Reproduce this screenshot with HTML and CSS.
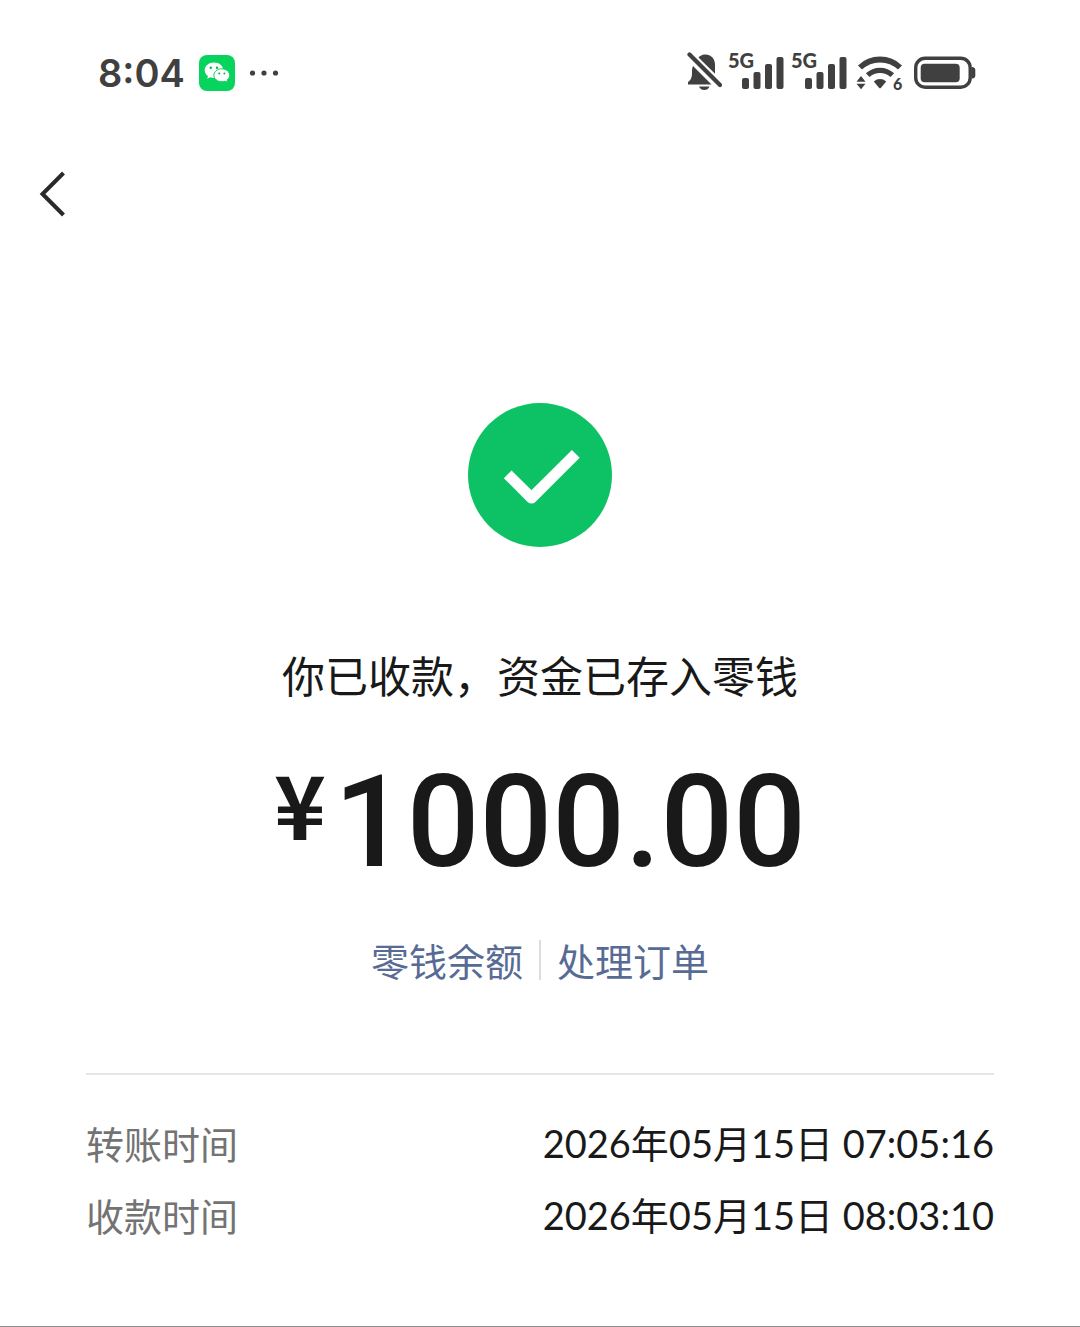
FILE: index.html
```html
<!DOCTYPE html>
<html lang="zh-CN">
<head>
    <meta charset="UTF-8">
    <meta name="viewport" content="width=device-width, initial-scale=1.0">
    <title>转账详情</title>
    <link rel="stylesheet" href="styles.css">
</head>
<body>
    <div class="status-bar">
        <div class="status-left">
            <span class="clock">8:04</span>
            <svg class="wechat" width="36" height="36" viewBox="0 0 36 36">
                <rect width="36" height="36" rx="8" fill="#06d45c"/>
                <path d="M15 7.500c-5.200 0-9.300 3.400-9.300 7.700 0 2.400 1.300 4.500 3.300 5.900l-.8 2.700 3.200-1.500c1.100.4 2.300.6 3.600.6 5.200 0 9.300-3.400 9.300-7.700S20.200 7.500 15 7.500z" fill="#fff"/>
                <path d="M22.800 13.800c4.400 0 7.900 2.900 7.900 6.500 0 2-1 3.700-2.700 4.900l.7 2.300-2.800-1.200c-1 .3-2 .5-3.100.5-4.400 0-7.900-2.900-7.900-6.500s3.500-6.500 7.900-6.500z" fill="#fff" stroke="#06d45c" stroke-width="1"/>
                <g fill="#06b552">
                    <circle cx="11.800" cy="12.800" r="1.200"/>
                    <circle cx="18" cy="12.800" r="1.200"/>
                    <circle cx="20.200" cy="18.500" r="1"/>
                    <circle cx="25.400" cy="18.500" r="1"/>
                </g>
            </svg>
            <svg class="more" width="30" height="8" viewBox="0 0 30 8" fill="#404040">
                <circle cx="3.500" cy="4" r="2.600"/>
                <circle cx="15" cy="4" r="2.600"/>
                <circle cx="26.500" cy="4" r="2.600"/>
            </svg>
        </div>
        <div class="status-right">
            <!-- muted bell -->
            <svg width="36" height="42" viewBox="0 0 36 42" fill="#404040">
                <path d="M7 16L25.500 34.500H2V32c2.400-1.600 3.500-3.400 3.900-6.500.3-3-.4-6.500 1.100-9.500z"/>
                <path d="M12.500 7.500c1.500-1.500 3.800-2.700 6-2.900 5.800-.6 10.500 3.900 10.500 9.900v9.300z"/>
                <path d="M13 36.500h10.500c-1 2.400-2.800 3.500-5.200 3.500s-4.300-1.100-5.300-3.500z"/>
                <path d="M3.500 4.500L34 35" stroke="#404040" stroke-width="4.200" stroke-linecap="round"/>
            </svg>
            <svg class="signal" width="59" height="50" viewBox="0 -4 59 50" fill="#404040">
                <text x="2" y="18">5G</text>
                <rect x="16" y="28" width="7" height="11" rx="2"/>
                <rect x="27.500" y="22" width="7" height="17" rx="2"/>
                <rect x="39" y="14" width="7" height="25" rx="2"/>
                <rect x="50.500" y="7" width="7" height="32" rx="2"/>
            </svg>
            <svg class="signal" width="59" height="50" viewBox="0 -4 59 50" fill="#404040">
                <text x="2" y="18">5G</text>
                <rect x="16" y="28" width="7" height="11" rx="2"/>
                <rect x="27.500" y="22" width="7" height="17" rx="2"/>
                <rect x="39" y="14" width="7" height="25" rx="2"/>
                <rect x="50.500" y="7" width="7" height="32" rx="2"/>
            </svg>
            <svg class="wifi" width="58" height="42" viewBox="0 0 58 42" fill="#404040">
                <path d="M8 17.500a29 29 0 0 1 40 0" fill="none" stroke="#404040" stroke-width="5.800"/>
                <path d="M15.700 25.200a18 18 0 0 1 24.600 0" fill="none" stroke="#404040" stroke-width="5.200"/>
                <path d="M21.800 31.500c3.600-3.300 8.800-3.300 12.400 0L28.800 38q-.8.700-1.600 0z"/>
                <path d="M9 26l4.500 5.700h-9zM9 39.300l4.500-5.600h-9z"/>
                <text x="41" y="40">6</text>
            </svg>
            <svg width="62" height="42" viewBox="0 0 62 42" fill="#404040">
                <rect x="1.700" y="8.200" width="54.500" height="29" rx="9.500" fill="none" stroke="#404040" stroke-width="3.400"/>
                <rect x="6.700" y="13.700" width="39" height="18.600" rx="4"/>
                <path d="M57.500 17h1q2.800.5 2.800 3v5.500q0 2.500-2.800 3h-1z"/>
            </svg>
        </div>
    </div>

    <header class="nav">
        <button class="back" type="button" aria-label="返回">
            <svg width="28" height="48" viewBox="0 0 28 48" fill="none" stroke="#2a2a2a" stroke-width="4">
                <path d="M25.500 3L4.500 24l21 21"/>
            </svg>
        </button>
    </header>

    <main class="result">
        <svg class="result-icon" width="144" height="144" viewBox="0 0 144 144">
            <circle cx="72" cy="72" r="72" fill="#0dc264"/>
            <path d="M39.700 71.300L63.500 95l44.300-44.200" fill="none" stroke="#fff" stroke-width="11" stroke-linejoin="round"/>
        </svg>
        <h1 class="result-title">你已收款，资金已存入零钱</h1>
        <p class="amount"><span class="currency">¥</span>1000.00</p>
        <div class="links">
            <a href="#">零钱余额</a>
            <a href="#">处理订单</a>
        </div>

        <dl class="details">
            <div class="row">
                <dt>转账时间</dt>
                <dd>2026年05月15日 07:05:16</dd>
            </div>
            <div class="row">
                <dt>收款时间</dt>
                <dd>2026年05月15日 08:03:10</dd>
            </div>
        </dl>
    </main>
</body>
</html>
```

FILE: styles.css
```css
* {
    box-sizing: border-box;
}
body {
    font-family: "Noto Sans CJK SC", sans-serif;
    background-color: #ffffff;
    color: #191919;
    margin: 0;
    min-height: 100vh;
    border-bottom: 1px solid #8c8c8c;
}
svg {
    display: block;
    flex-shrink: 0;
}

/* Status Bar */
.status-bar {
    display: flex;
    align-items: center;
    justify-content: space-between;
    height: 146px;
    padding: 0 104px 0 98px;
    color: #404040;
}
.status-left,
.status-right {
    display: flex;
    align-items: center;
}
.status-left {
    gap: 14px;
}
.status-right {
    gap: 4px;
    padding-bottom: 4px;
}
.clock {
    font-family: Inter, sans-serif;
    font-size: 38px;
    font-weight: 600;
    line-height: 48px;
}
.signal text {
    font-family: Lato, sans-serif;
    font-size: 20px;
    font-weight: 900;
}
.wifi text {
    font-family: Lato, sans-serif;
    font-size: 16px;
    font-weight: 900;
}

/* Navigation */
.nav {
    display: flex;
    padding: 24px 38px 0;
}
.back {
    padding: 0;
    border: none;
    background: none;
    cursor: pointer;
}

/* Result */
.result {
    display: flex;
    flex-direction: column;
    align-items: center;
    padding: 185px 86px 0;
}
.result-title {
    margin: 97px 0 0;
    font-size: 43px;
    font-weight: 400;
    line-height: 60px;
}
.amount {
    display: flex;
    align-items: flex-start;
    gap: 8px;
    margin: 48px 0 0;
    font-family: Roboto, sans-serif;
    font-size: 128px;
    font-weight: 500;
    line-height: 140px;
}
.currency {
    font-family: "Noto Sans CJK SC", sans-serif;
    font-size: 88px;
    font-weight: 700;
    line-height: 100px;
}
.links {
    display: flex;
    margin-top: 48px;
    font-size: 38px;
    line-height: 40px;
}
.links a {
    padding: 0 16px;
    color: #576b95;
    text-decoration: none;
}
.links a + a {
    border-left: 2px solid #dedede;
}

/* Details */
.details {
    width: 100%;
    margin: 93px 0 0;
    padding-top: 32px;
    border-top: 2px solid #e6e6e6;
    font-size: 38px;
    line-height: 72px;
}
.row {
    display: flex;
    justify-content: space-between;
}
.row dt {
    color: #737373;
}
.row dd {
    margin: 0;
    font-family: Lato, "Noto Sans CJK SC", sans-serif;
}
```
